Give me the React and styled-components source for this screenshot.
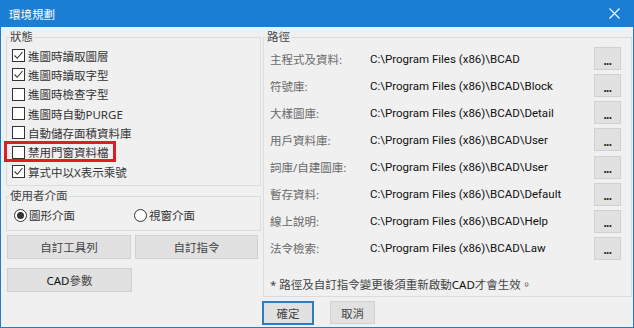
import React from 'react';
import styled, { createGlobalStyle } from 'styled-components';

const GlobalStyle = createGlobalStyle`
  body {
    margin: 0;
    background: #f0f0f0;
  }
`;

const statusItems = [
  { text: '進圖時讀取圖層', checked: true },
  { text: '進圖時讀取字型', checked: true },
  { text: '進圖時檢查字型', checked: false },
  { text: '進圖時自動PURGE', checked: false },
  { text: '自動儲存面積資料庫', checked: false },
  { text: '禁用門窗資料檔', checked: false, marked: true },
  { text: '算式中以X表示乘號', checked: true },
];

const paths = [
  ['主程式及資料:', 'C:\\Program Files (x86)\\BCAD'],
  ['符號庫:', 'C:\\Program Files (x86)\\BCAD\\Block'],
  ['大樣圖庫:', 'C:\\Program Files (x86)\\BCAD\\Detail'],
  ['用戶資料庫:', 'C:\\Program Files (x86)\\BCAD\\User'],
  ['詞庫/自建圖庫:', 'C:\\Program Files (x86)\\BCAD\\User'],
  ['暫存資料:', 'C:\\Program Files (x86)\\BCAD\\Default'],
  ['線上說明:', 'C:\\Program Files (x86)\\BCAD\\Help'],
  ['法令檢索:', 'C:\\Program Files (x86)\\BCAD\\Law'],
];

const Window = styled.div`
  width: 634px;
  height: 328px;
  box-sizing: border-box;
  border: 1px solid #1a7fd4;
  border-top: none;
  background: #f0f0f0;
  font-family: "Noto Sans", "Noto Sans CJK TC", sans-serif;
  font-size: 11.5px;
  color: #333;
  display: flex;
  flex-direction: column;
`;

const TitleBar = styled.div`
  height: 27px;
  margin: 0 -1px;
  background: #1a7fd4;
  color: #fff;
  display: flex;
  align-items: center;
  justify-content: space-between;
  padding: 0 14px 0 9px;
  font-size: 11.5px;
`;

const Body = styled.div`
  flex: 1;
  display: flex;
  gap: 2px;
  padding: 2px 1px 0 5px;
`;

const LeftCol = styled.div`
  width: 255px;
  display: flex;
  flex-direction: column;
`;

const RightCol = styled.div`
  flex: 1;
  display: flex;
  flex-direction: column;
`;

const Group = styled.fieldset`
  margin: ${(p) => p.$mt || 0}px 0 0;
  padding: ${(p) => p.$pad};
  border: 1px solid #dcdcdc;
  min-width: 0;
`;

const Legend = styled.legend`
  padding: 0 1px;
  margin-left: 2px;
  line-height: 16px;
  color: #444;
`;

const CheckRow = styled.div`
  position: relative;
  height: 19.33px;
  display: flex;
  align-items: center;
  gap: 3px;
  padding-left: 5px;

  ${(p) =>
    p.$marked &&
    `
    &::after {
      content: '';
      position: absolute;
      left: -3px;
      top: -2px;
      width: 112px;
      height: 21px;
      border: 3px solid #e31b23;
      box-sizing: border-box;
    }
  `}
`;

const Box = styled.span`
  width: 13px;
  height: 13px;
  box-sizing: border-box;
  border: 1px solid #333;
  background: #fff;
  display: flex;
  align-items: center;
  justify-content: center;
`;

const RadioRow = styled.div`
  height: 20px;
  display: flex;
  align-items: center;
  padding-left: 7px;
`;

const RadioItem = styled.label`
  display: flex;
  align-items: center;
  gap: 2px;
  width: 120px;
`;

const RadioCircle = styled.span`
  width: 13px;
  height: 13px;
  box-sizing: border-box;
  border: 1px solid #333;
  border-radius: 50%;
  background: #fff;
  display: flex;
  align-items: center;
  justify-content: center;

  &::after {
    content: '';
    width: 7px;
    height: 7px;
    border-radius: 50%;
    background: ${(p) => (p.$on ? '#333' : 'transparent')};
  }
`;

const ButtonRow = styled.div`
  display: flex;
  gap: 4px;
  margin: ${(p) => p.$mt}px 0 0 1px;
`;

const Button = styled.button`
  width: ${(p) => p.$w}px;
  height: ${(p) => p.$h || 24}px;
  box-sizing: border-box;
  background: #e1e1e1;
  border: ${(p) => (p.$default ? '2px solid #2f7cc2' : '1px solid #d0d0d0')};
  font-family: inherit;
  font-size: 11.5px;
  color: #444;
  padding: 0;
  display: flex;
  align-items: center;
  justify-content: center;
`;

const Dots = styled.span`
  font-weight: bold;
  color: #222;
  margin-top: 3px;
  letter-spacing: -0.5px;
`;

const Latin = styled.span`
  color: #111;
`;

const PathRow = styled.div`
  height: 27.14px;
  display: grid;
  grid-template-columns: 100px 1fr 27px;
  align-items: center;
  padding: 0 10px 0 6px;
`;

const PathLabel = styled.span`
  color: #6a6a6a;
`;

const PathValue = styled.span`
  color: #111;
  font-family: Roboto, "Noto Sans", sans-serif;
  font-size: 11.5px;
  white-space: nowrap;
`;

const Note = styled.div`
  margin: 15px 0 3px 6px;
  line-height: 16px;
  color: #444;
`;

const Footer = styled.div`
  display: flex;
  gap: 16px;
  margin: 4px 0 0 -1px;
`;

const Check = () => (
  <svg width="11" height="11" viewBox="0 0 11 11">
    <path d="M1.5 5.5 L4.3 8.3 L9.5 2" fill="none" stroke="#333" strokeWidth="1.1" />
  </svg>
);

const CloseIcon = () => (
  <svg width="11" height="11" viewBox="0 0 11 11">
    <path d="M0.5 0.5 L10.5 10.5 M10.5 0.5 L0.5 10.5" stroke="#fff" strokeWidth="1.1" />
  </svg>
);

export default function App() {
  return (
    <>
      <GlobalStyle />
      <Window>
        <TitleBar>
          <span>環境規劃</span>
          <CloseIcon />
        </TitleBar>
        <Body>
          <LeftCol>
            <Group $pad="1px 0 4px 0">
              <Legend>狀態</Legend>
              {statusItems.map((item) => (
                <CheckRow key={item.text} $marked={item.marked}>
                  <Box>{item.checked && <Check />}</Box>
                  <span>{item.text}</span>
                </CheckRow>
              ))}
            </Group>
            <Group $mt={2} $pad="1px 0 5px 0">
              <Legend>使用者介面</Legend>
              <RadioRow>
                <RadioItem>
                  <RadioCircle $on />
                  圖形介面
                </RadioItem>
                <RadioItem>
                  <RadioCircle />
                  視窗介面
                </RadioItem>
              </RadioRow>
            </Group>
            <ButtonRow $mt={4}>
              <Button $w={124}>自訂工具列</Button>
              <Button $w={123}>自訂指令</Button>
            </ButtonRow>
            <ButtonRow $mt={9}>
              <Button $w={125}>
                <Latin>CAD</Latin>參數
              </Button>
            </ButtonRow>
          </LeftCol>
          <RightCol>
            <Group $pad="0">
              <Legend>路徑</Legend>
              {paths.map(([label, value]) => (
                <PathRow key={label}>
                  <PathLabel>{label}</PathLabel>
                  <PathValue>{value}</PathValue>
                  <Button $w={27} $h={23}>
                    <Dots>...</Dots>
                  </Button>
                </PathRow>
              ))}
              <Note>
                * 路徑及自訂指令變更後須重新啟動<Latin>CAD</Latin>才會生效。
              </Note>
            </Group>
            <Footer>
              <Button $w={52} $h={24} $default>確定</Button>
              <Button $w={45} $h={23}>取消</Button>
            </Footer>
          </RightCol>
        </Body>
      </Window>
    </>
  );
}
